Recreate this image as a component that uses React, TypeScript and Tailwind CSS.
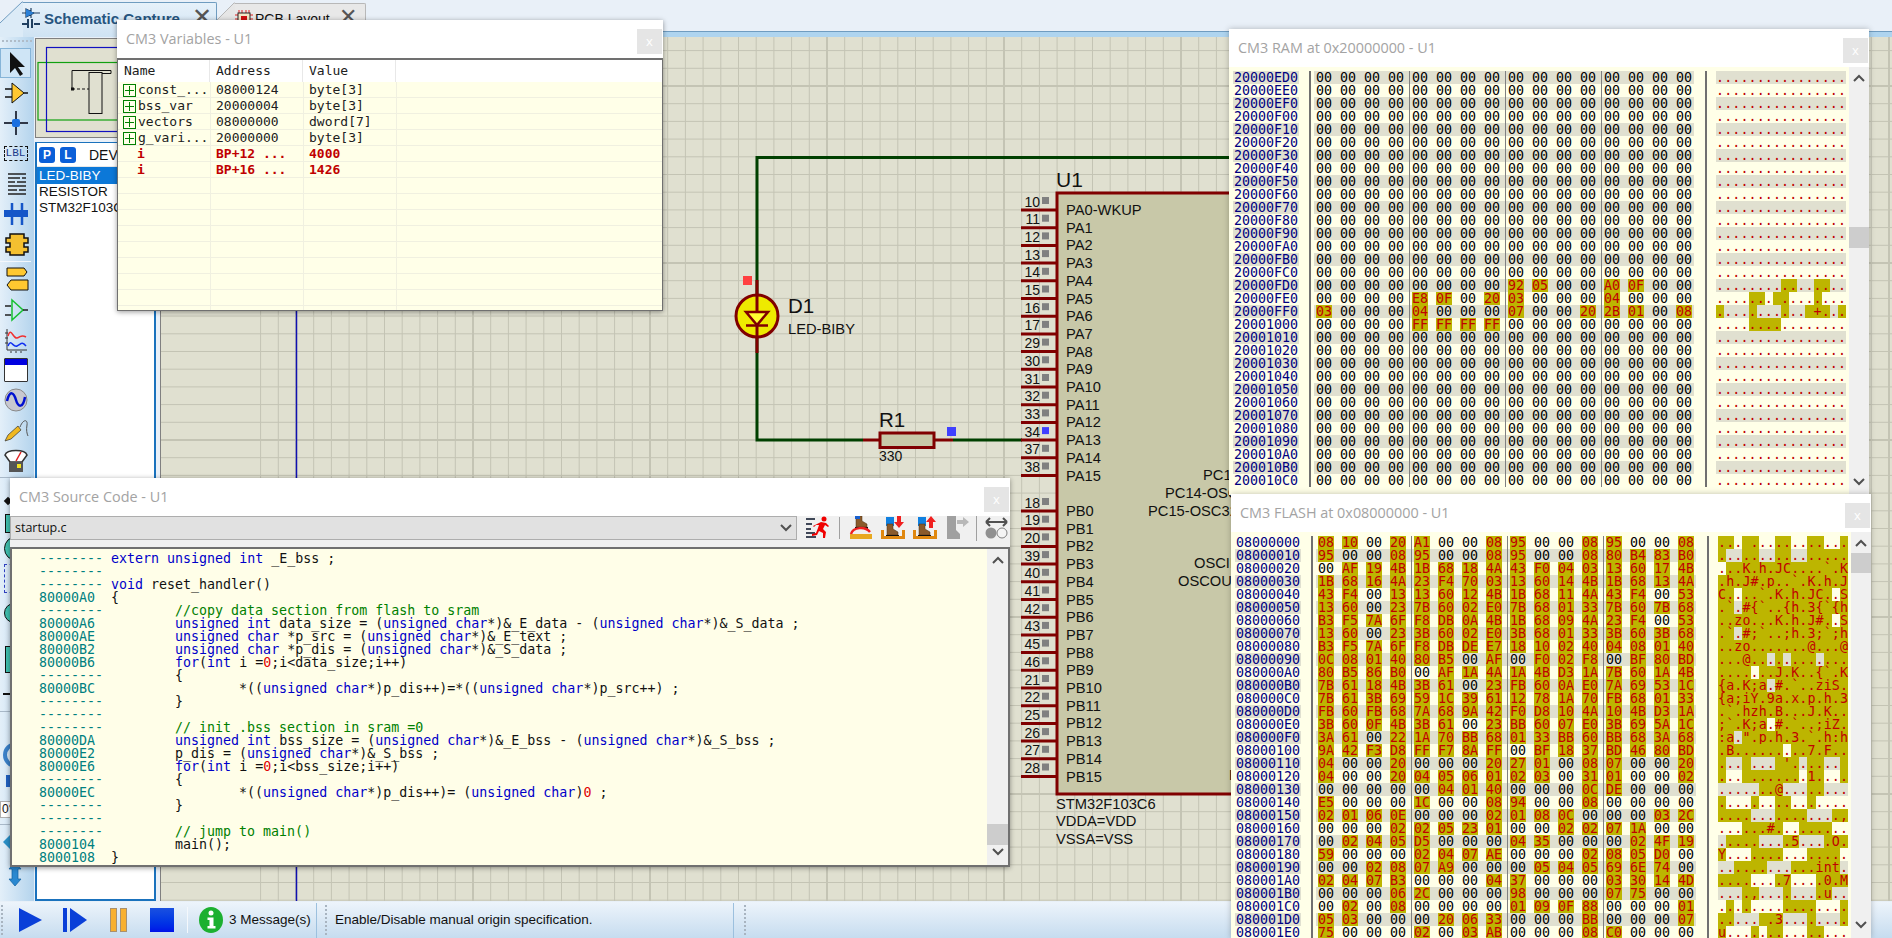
import { type ReactNode } from "react";

const MONO = "font-['DejaVu_Sans_Mono',monospace]";

const ZERO_ROW = "00 00 00 00 00 00 00 00 00 00 00 00 00 00 00 00";

const ramOverrides: Record<number, string> = {
  16: "00 00 00 00 00 00 00 00 92 05 00 00 A0 0F 00 00",
  17: "00 00 00 00 E8 0F 00 20 03 00 00 00 04 00 00 00",
  18: "03 00 00 00 04 00 00 00 07 00 00 20 2B 01 00 08",
  19: "00 00 00 00 FF FF FF FF 00 00 00 00 00 00 00 00",
};
const ramRows = Array.from({ length: 32 }, (_, i) => ramOverrides[i] ?? ZERO_ROW);

const flashRows = [
  "08 10 00 20 A1 00 00 08 95 00 00 08 95 00 00 08",
  "95 00 00 08 95 00 00 08 95 00 00 08 80 B4 83 B0",
  "00 AF 19 4B 1B 68 18 4A 43 F0 04 03 13 60 17 4B",
  "1B 68 16 4A 23 F4 70 03 13 60 14 4B 1B 68 13 4A",
  "43 F4 00 13 13 60 12 4B 1B 68 11 4A 43 F4 00 53",
  "13 60 00 23 7B 60 02 E0 7B 68 01 33 7B 60 7B 68",
  "B3 F5 7A 6F F8 DB 0A 4B 1B 68 09 4A 23 F4 00 53",
  "13 60 00 23 3B 60 02 E0 3B 68 01 33 3B 60 3B 68",
  "B3 F5 7A 6F F8 DB DE E7 18 10 02 40 04 08 01 40",
  "0C 08 01 40 80 B5 00 AF 00 F0 02 F8 00 BF 80 BD",
  "80 B5 86 B0 00 AF 1A 4A 1A 4B D3 1A 7B 60 1A 4B",
  "7B 61 18 4B 3B 61 00 23 FB 60 0A E0 7A 69 53 1C",
  "7B 61 3B 69 59 1C 39 61 12 78 1A 70 FB 68 01 33",
  "FB 60 FB 68 7A 68 9A 42 F0 D8 10 4A 10 4B D3 1A",
  "3B 60 0F 4B 3B 61 00 23 BB 60 07 E0 3B 69 5A 1C",
  "3A 61 00 22 1A 70 BB 68 01 33 BB 60 BB 68 3A 68",
  "9A 42 F3 D8 FF F7 8A FF 00 BF 18 37 BD 46 80 BD",
  "04 00 00 20 00 00 00 20 27 01 00 08 07 00 00 20",
  "04 00 00 20 04 05 06 01 02 03 00 31 01 00 00 02",
  "00 00 00 00 00 04 01 40 00 00 00 0C DE 00 00 00",
  "E5 00 00 00 1C 00 00 08 94 00 00 08 00 00 00 00",
  "02 01 06 0E 00 00 00 02 01 08 0C 00 00 00 03 2C",
  "00 00 00 02 02 05 23 01 00 00 02 02 07 1A 00 00",
  "00 02 04 05 D5 00 00 00 04 35 00 00 00 02 4F 19",
  "59 00 00 00 02 04 07 AE 00 00 00 02 08 05 D0 00",
  "00 00 02 08 07 A9 00 00 00 05 04 05 69 6E 74 00",
  "02 04 07 B3 00 00 00 04 37 00 00 00 03 30 14 4D",
  "00 00 00 06 2C 00 00 00 98 00 00 00 07 75 00 00",
  "00 02 00 08 00 00 00 00 01 09 0F 88 00 00 00 01",
  "05 03 00 00 00 20 06 33 00 00 00 BB 00 00 00 07",
  "75 00 00 00 02 00 03 AB 00 00 00 08 C0 00 00 00",
];

const codeLines: [string, string][] = [
  ["--------", "extern unsigned int _E_bss ;"],
  ["--------", ""],
  ["--------", "void reset_handler()"],
  ["80000A0", "{"],
  ["--------", "        //copy data section from flash to sram"],
  ["80000A6", "        unsigned int data_size = (unsigned char*)&_E_data - (unsigned char*)&_S_data ;"],
  ["80000AE", "        unsigned char *p_src = (unsigned char*)&_E_text ;"],
  ["80000B2", "        unsigned char *p_dis = (unsigned char*)&_S_data ;"],
  ["80000B6", "        for(int i =0;i<data_size;i++)"],
  ["--------", "        {"],
  ["80000BC", "                *((unsigned char*)p_dis++)=*((unsigned char*)p_src++) ;"],
  ["--------", "        }"],
  ["--------", ""],
  ["--------", "        // init .bss section in sram =0"],
  ["80000DA", "        unsigned int bss_size = (unsigned char*)&_E_bss - (unsigned char*)&_S_bss ;"],
  ["80000E2", "        p_dis = (unsigned char*)&_S_bss ;"],
  ["80000E6", "        for(int i =0;i<bss_size;i++)"],
  ["--------", "        {"],
  ["80000EC", "                *((unsigned char*)p_dis++)= (unsigned char)0 ;"],
  ["--------", "        }"],
  ["--------", ""],
  ["--------", "        // jump to main()"],
  ["8000104", "        main();"],
  ["8000108", "}"],
];

const variables = [
  { name: "const_...", addr: "08000124", value: "byte[3]" },
  { name: "bss_var", addr: "20000004", value: "byte[3]" },
  { name: "vectors", addr: "08000000", value: "dword[7]" },
  { name: "g_vari...", addr: "20000000", value: "byte[3]" },
];
const locals = [
  { addr: "BP+12 ...", value: "4000" },
  { addr: "BP+16 ...", value: "1426" },
];

const paPins = ["10", "11", "12", "13", "14", "15", "16", "17", "29", "30", "31", "32", "33", "34", "37", "38"];
const pbPins = ["18", "19", "20", "39", "40", "41", "42", "43", "45", "46", "21", "22", "25", "26", "27", "28"];

function Chevron({ up }: { up?: boolean }) {
  return (
    <svg width="12" height="8" viewBox="0 0 12 8">
      <polyline
        points={up ? "1,7 6,2 11,7" : "1,1 6,6 11,1"}
        fill="none"
        stroke="#505050"
        strokeWidth="2"
      />
    </svg>
  );
}

function Scrollbar({ thumbClass, width }: { thumbClass: string; width: string }) {
  return (
    <div className={`flex shrink-0 flex-col items-center bg-[#f0f0f0] pt-[7px] pb-[9px] ${width}`}>
      <Chevron up />
      <div className={`w-full bg-[#cdcdcd] ${thumbClass}`} />
      <div className="mt-auto">
        <Chevron />
      </div>
    </div>
  );
}

function TitleBar({ title }: { title: string }) {
  return (
    <div className="relative flex h-[38px] shrink-0 items-center bg-white pl-[9px] font-['Open_Sans',sans-serif] text-[14.4px] text-[#a3a3a3]">
      {title}
      <div className="absolute top-[9px] right-px flex h-[25px] w-[25px] items-center justify-center bg-[#e5e5e5] text-[13px] text-white">
        x
      </div>
    </div>
  );
}

function toAscii(hex: string) {
  const n = parseInt(hex, 16);
  if (n === 0x20) return "\u00a0";
  return n > 0x20 && n < 0x7f ? String.fromCharCode(n) : ".";
}

function HexRow({ addr, row, banded }: { addr: string; row: string; banded: boolean }) {
  const bytes = row.split(" ");
  const band = banded ? "bg-[#e0e0d0]" : "";
  const groups = [bytes.slice(0, 4), bytes.slice(4, 8), bytes.slice(8, 12), bytes.slice(12, 16)];
  return (
    <div className="flex h-[13px] pl-[4px] leading-[13px]">
      <div className={`w-[66px] pl-[1px] text-[#000080] ${band}`}>{addr}</div>
      <div className="ml-[10px] w-[2px] bg-[#707070]" />
      <div className={`ml-[3px] flex w-[380px] overflow-hidden ${band}`}>
        {groups.map((group, g) => (
          <div key={g} className={`flex w-[96px] shrink-0 ${g < 3 ? "border-r border-[#808080]" : ""}`}>
            {group.map((b, i) => (
              <span
                key={i}
                className={`ml-[2px] mr-[6px] w-[16px] shrink-0 text-center ${
                  b === "00" ? "text-black" : "bg-[#bdb500] text-[#c00000]"
                }`}
              >
                {b}
              </span>
            ))}
          </div>
        ))}
      </div>
      <div className="ml-[11px] w-[2px] bg-[#707070]" />
      <div className={`ml-[9px] flex w-[130px] text-[#c00000] ${band}`}>
        {bytes.map((b, i) => (
          <span key={i} className={`w-[8.125px] shrink-0 text-center ${b === "00" ? "" : "bg-[#bdb500]"}`}>
            {toAscii(b)}
          </span>
        ))}
      </div>
    </div>
  );
}

function HexWindow({
  className,
  title,
  base,
  rows,
  bandOffset,
  thumbClass,
}: {
  className: string;
  title: string;
  base: number;
  rows: string[];
  bandOffset: number;
  thumbClass: string;
}) {
  return (
    <div className={`absolute flex w-[640px] flex-col bg-white shadow-[0_0_6px_rgba(0,0,0,0.25)] ${className}`}>
      <TitleBar title={title} />
      <div className={`flex min-h-0 flex-1 bg-[#ffffe8] text-[13.3px] ${MONO}`}>
        <div className="flex-1 overflow-hidden pt-[4px]">
          {rows.map((row, i) => (
            <HexRow
              key={i}
              addr={(base + i * 16).toString(16).toUpperCase().padStart(8, "0")}
              row={row}
              banded={(i + bandOffset) % 2 === 0}
            />
          ))}
        </div>
        <Scrollbar thumbClass={thumbClass} width="w-[20px]" />
      </div>
    </div>
  );
}

function VariablesWindow() {
  const cellBorder = "border-r border-[#f0f0e0]";
  return (
    <div className="absolute top-[20px] left-[117px] flex h-[291px] w-[546px] flex-col bg-white shadow-[0_1px_5px_rgba(0,0,0,0.4)]">
      <TitleBar title="CM3 Variables - U1" />
      <div className={`flex-1 overflow-hidden border border-t-2 border-[#707070] text-[13px] leading-[16px] ${MONO}`}>
        <div className="grid h-[22px] grid-cols-[92px_93px_93px_1fr] items-center bg-white text-[#202020]">
          <div className="h-full border-r border-[#e8e8e8] pt-[3px] pl-[6px]">Name</div>
          <div className="h-full border-r border-[#e8e8e8] pt-[3px] pl-[6px]">Address</div>
          <div className="h-full border-r border-[#e8e8e8] pt-[3px] pl-[6px]">Value</div>
          <div />
        </div>
        <div className="h-full bg-[#ffffe8]">
          {variables.map((v) => (
            <div key={v.name} className="grid h-[16px] grid-cols-[93px_93px_93px_1fr] border-b border-[#f0f0e0] text-[#202020]">
              <div className={`flex items-center pl-[5px] ${cellBorder}`}>
                <span className="relative mr-[2px] h-[13px] w-[13px] shrink-0 border border-[#008000]">
                  <span className="absolute top-[5px] left-[1px] h-px w-[9px] bg-[#008000]" />
                  <span className="absolute top-[1px] left-[5px] h-[9px] w-px bg-[#008000]" />
                </span>
                {v.name}
              </div>
              <div className={`pl-[5px] ${cellBorder}`}>{v.addr}</div>
              <div className={`pl-[5px] ${cellBorder}`}>{v.value}</div>
              <div />
            </div>
          ))}
          {locals.map((v) => (
            <div key={v.addr} className="grid h-[16px] grid-cols-[93px_93px_93px_1fr] border-b border-[#f0f0e0] font-bold text-[#c00000]">
              <div className={`pl-[19px] ${cellBorder}`}>i</div>
              <div className={`pl-[5px] ${cellBorder}`}>{v.addr}</div>
              <div className={`pl-[5px] ${cellBorder}`}>{v.value}</div>
              <div />
            </div>
          ))}
          {Array.from({ length: 9 }, (_, i) => (
            <div key={i} className="grid h-[16px] grid-cols-[93px_93px_93px_1fr] border-b border-[#f0f0e0]">
              <div className={cellBorder} />
              <div className={cellBorder} />
              <div className={cellBorder} />
              <div />
            </div>
          ))}
        </div>
      </div>
    </div>
  );
}

function CodeText({ text }: { text: string }) {
  if (text.trim().startsWith("//")) return <span className="text-[#008000]">{text}</span>;
  const parts = text.split(/(\b(?:unsigned|int|char|void|for|extern)\b|=0|\)0)/);
  return (
    <>
      {parts.map((part, i) => {
        if (/^(unsigned|int|char|void|for|extern)$/.test(part))
          return (
            <span key={i} className="text-[#0000c8]">
              {part}
            </span>
          );
        if (part === "=0" || part === ")0")
          return (
            <span key={i}>
              {part[0]}
              <span className="text-[#e00000]">0</span>
            </span>
          );
        return <span key={i}>{part}</span>;
      })}
    </>
  );
}

function Boot({ x, y, color = "#8a5a2b" }: { x: number; y: number; color?: string }) {
  return (
    <g transform={`translate(${x} ${y})`}>
      <path d="M2 0h6v5l5 3v3H2z" fill={color} stroke="#4a3015" strokeWidth="0.5" />
      <rect x="1" y="11" width="13" height="2" fill="#111" />
    </g>
  );
}

function DebugIcons() {
  return (
    <div className="flex h-[23px] shrink-0 items-center">
      <svg width="24" height="23" viewBox="0 0 24 23" className="ml-[9px]">
        <g fill="#404858">
          <rect x="0" y="2" width="9" height="2" />
          <rect x="0" y="7" width="6" height="2" />
          <rect x="0" y="12" width="5" height="2" />
          <rect x="0" y="16" width="9" height="2" />
          <rect x="0" y="20" width="10" height="2" />
        </g>
        <circle cx="18" cy="3" r="2.5" fill="#f00000" />
        <path d="M15 6l5 1 3 3-1 1-3-2-2 4 3 3-1 6h-2l0-5-4-2-2 4-5 1v-2l4-1 2-5 1-3-3 0-2 2-1-1z" fill="#f00000" />
      </svg>
      <div className="mx-[9px] h-[22px] w-px bg-[#a0a0a0]" />
      <svg width="24" height="23" viewBox="0 0 24 23">
        <Boot x={5} y={0} />
        <rect x="6" y="0" width="5" height="3" fill="#1860d0" />
        <rect x="1" y="18" width="22" height="5" fill="#e8a820" />
        <path d="M2 18c2-7 14-8 19-2" fill="none" stroke="#f02020" strokeWidth="2.5" />
      </svg>
      <svg width="24" height="23" viewBox="0 0 24 23" className="ml-[8px]">
        <rect x="5" y="1" width="8" height="9" fill="#1080e0" />
        <Boot x={4} y={8} />
        <path d="M0 14h3v6h18v-6h3v9H0z" fill="#e08810" />
        <path d="M16 0h4v6h3l-5 6-5-6h3z" fill="#f02020" />
      </svg>
      <svg width="24" height="23" viewBox="0 0 24 23" className="ml-[8px]">
        <rect x="5" y="1" width="8" height="9" fill="#1080e0" />
        <Boot x={4} y={8} />
        <path d="M0 14h3v6h18v-6h3v9H0z" fill="#e08810" />
        <path d="M16 12h4V6h3l-5-6-5 6h3z" fill="#f02020" />
      </svg>
      <svg width="24" height="23" viewBox="0 0 24 23" className="ml-[8px]">
        <path d="M2 0h9v14l4 4v5H2z" fill="#a0a0a0" />
        <path d="M12 4h6V1l6 5-6 5V8h-6z" fill="#b8b8b8" />
      </svg>
      <div className="mx-[7px] h-[26px] w-px bg-[#a0a0a0]" />
      <svg width="25" height="23" viewBox="0 0 25 23">
        <path d="M2 6h21M2 6l4-4M2 6l4 4M23 6l-4-4M23 6l-4 4" fill="none" stroke="#505050" strokeWidth="2" />
        <circle cx="7" cy="17" r="5.5" fill="#909090" />
        <circle cx="18" cy="17" r="5" fill="#f4f4f4" stroke="#808080" />
      </svg>
    </div>
  );
}

function SourceWindow() {
  return (
    <div className="absolute top-[478px] left-[10px] flex h-[389px] w-[1000px] flex-col bg-white shadow-[0_1px_5px_rgba(0,0,0,0.4)]">
      <TitleBar title="CM3 Source Code - U1" />
      <div className="flex h-[31px] shrink-0 bg-[#f0f0f0]">
        <div className="flex h-[24px] w-[787px] items-center justify-between border border-[#adadad] bg-[#e1e1e1] pr-[4px] pl-[4px] font-['Open_Sans',sans-serif] text-[12.5px] text-[#111]">
          startup.c
          <Chevron />
        </div>
        <DebugIcons />
      </div>
      <div className="flex min-h-0 flex-1 border-2 border-[#707070] bg-[#fffee8]">
        <div className={`flex-1 overflow-hidden pt-[3px] pl-[27px] text-[13.3px] leading-[13px] whitespace-pre text-[#111] ${MONO}`}>
          {codeLines.map(([addr, text], i) => (
            <div key={i} className="flex h-[13px]">
              <span className="w-[72px] shrink-0 text-[#008080]">{addr}</span>
              <span>
                <CodeText text={text} />
              </span>
            </div>
          ))}
        </div>
        <Scrollbar thumbClass="mt-[260px] h-[21px]" width="w-[21px]" />
      </div>
    </div>
  );
}

function Tool({ children, active, h = "h-[30px]" }: { children?: ReactNode; active?: boolean; h?: string }) {
  return (
    <div
      className={`flex w-[31px] shrink-0 items-center justify-center ${h} ${
        active ? "border border-[#86b4d8] bg-[#cfe5f6]" : ""
      }`}
    >
      {children}
    </div>
  );
}

function ToolIcon({ children }: { children: ReactNode }) {
  return (
    <svg width="26" height="26" viewBox="0 0 26 26">
      {children}
    </svg>
  );
}

function LeftToolbar() {
  return (
    <div className="flex w-[34px] shrink-0 flex-col bg-gradient-to-r from-[#e3eff9] to-[#b4d4ed] pt-[3px]">
      <div className="mx-[2px] mb-[5px] h-[3px] border-t-2 border-dotted border-[#b0bcc8]" />
      <Tool active>
        <ToolIcon>
          <path d="M7 2v21l5-5 5 8 3-2-5-7h7z" fill="#111" />
        </ToolIcon>
      </Tool>
      <Tool>
        <ToolIcon>
          <path d="M9 3l12 10-12 10z" fill="#ffc830" stroke="#111" />
          <path d="M2 9h7M2 17h7M21 13h4" stroke="#111" strokeWidth="1.5" />
        </ToolIcon>
      </Tool>
      <Tool>
        <ToolIcon>
          <path d="M1 13h24M13 1v24" stroke="#303848" strokeWidth="2" />
          <rect x="9" y="9" width="8" height="8" rx="2" fill="#1a6fe0" />
        </ToolIcon>
      </Tool>
      <Tool>
        <div className="flex h-[15px] w-[24px] items-center justify-center border border-dashed border-[#111] font-['Liberation_Mono',monospace] text-[11px] text-[#1a3a8a]">
          LBL
        </div>
      </Tool>
      <Tool>
        <ToolIcon>
          <path
            d="M5 4h18M5 8h12M19 8h4M5 12h7M14 12h9M5 16h18M5 20h9M16 20h7M5 24h18"
            stroke="#222"
            strokeWidth="1.3"
          />
        </ToolIcon>
      </Tool>
      <Tool>
        <ToolIcon>
          <path d="M9 3v8M19 3v8M9 17v8M19 17v8" stroke="#1556c8" strokeWidth="2.5" />
          <rect x="1" y="10" width="24" height="7" fill="#1556c8" />
        </ToolIcon>
      </Tool>
      <Tool h="h-[32px]">
        <ToolIcon>
          <path
            d="M7 3h14v4h4v5h-4v4h4v5h-4v3H7v-3H3v-5h4v-4H3V7h4z"
            fill="#f4c030"
            stroke="#111"
            strokeWidth="1.5"
          />
        </ToolIcon>
      </Tool>
      <div className="my-[1px] h-px w-[31px] bg-[#f4f8fc]" />
      <Tool h="h-[32px]">
        <ToolIcon>
          <path d="M4 2h17l3 4-3 4H4zM25 14v10H8l-4-5 4-5z" fill="#ffc830" stroke="#111" />
        </ToolIcon>
      </Tool>
      <Tool>
        <ToolIcon>
          <path d="M9 3l11 10L9 23z" fill="none" stroke="#16c030" strokeWidth="1.5" />
          <path d="M2 9h6M2 18h6M20 13h5" stroke="#222" strokeWidth="1.3" />
        </ToolIcon>
      </Tool>
      <Tool>
        <ToolIcon>
          <path d="M4 2v21h20" stroke="#333" fill="none" />
          <path d="M2 6h3M2 11h3M2 16h3M8 24v2M13 24v2M18 24v2" stroke="#333" />
          <path d="M5 9c3-10 5 3 9 2s4-4 9-1" fill="none" stroke="#f03030" strokeWidth="1.5" />
          <path d="M5 19c3-8 5 2 9 0s5-5 9 0" fill="none" stroke="#1030f0" strokeWidth="1.5" />
        </ToolIcon>
      </Tool>
      <Tool>
        <div className="flex h-[24px] w-[24px] flex-col rounded-[1px] border border-[#333] bg-white">
          <div className="h-[6px] bg-[#0000e0]" />
        </div>
      </Tool>
      <Tool>
        <ToolIcon>
          <circle cx="13" cy="13" r="11" fill="#c8c8d0" stroke="#888" />
          <path d="M4 14c3-12 7-8 9-1s7 9 9-3" fill="none" stroke="#0010d0" strokeWidth="2.5" />
        </ToolIcon>
      </Tool>
      <Tool>
        <ToolIcon>
          <path d="M2 24l3-6 10-9 3 4-10 9z" fill="#f0b820" stroke="#333" strokeWidth="0.7" />
          <path d="M17 10c3-8 8-8 7-2-1 5 0 9 1 11" fill="none" stroke="#555" />
        </ToolIcon>
      </Tool>
      <Tool>
        <ToolIcon>
          <path d="M2 8c2-6 20-6 22 0l-5 7H7z" fill="#fff" stroke="#333" strokeWidth="1.5" />
          <path d="M13 14l5-9" stroke="#e02020" strokeWidth="1.5" />
          <rect x="6" y="15" width="14" height="10" fill="#555" />
          <rect x="14" y="17" width="4" height="4" fill="#f0e020" />
        </ToolIcon>
      </Tool>
      <div className="mt-[2px] h-px w-[31px] bg-[#a8b8c8]" />
      {/* rest of the column only shows as a sliver left of the source window */}
      <div className="mt-[20px] ml-[5px] h-[6px] w-[6px] rotate-[-45deg] bg-[#111]" />
      <div className="mt-[10px] ml-[5px] h-[19px] w-[8px] border border-[#111] bg-[#40c0b0]" />
      <div className="mt-[3px] ml-[4px] h-[25px] w-[25px] rounded-full border border-[#111] bg-[#40c0b0]" />
      <div className="mt-[3px] ml-[4px] h-[29px] w-[20px] border border-dashed border-[#3040c0]" />
      <div className="mt-[10px] ml-[4px] h-[20px] w-[20px] rounded-full border border-[#111] bg-[#40c0b0]" />
      <div className="mt-[23px] ml-[5px] h-[27px] w-[8px] border border-[#111] bg-[#40c0b0]" />
      <div className="mt-[20px] ml-[3px] h-[2px] w-[10px] bg-[#111]" />
      <div className="mt-[16px] h-px w-[31px] bg-[#a8b8c8]" />
      <div className="mt-[30px] ml-[3px] h-[26px] w-[26px] rounded-full border-[4px] border-[#3a80c8]" />
      <div className="mt-[7px] ml-[6px] h-[12px] w-[8px] bg-[#2060c0]" />
      <div className="mt-[14px] h-[17px] w-[28px] border border-[#b0b0b0] bg-white pl-[1px] text-[12px] leading-[15px] text-[#111]">
        0°
      </div>
      <div className="mt-[6px] h-px w-[31px] bg-[#a8b8c8]" />
      <div className="mt-[9px] ml-[3px] h-0 w-0 border-y-[8px] border-r-[8px] border-y-transparent border-r-[#2a90c8]" />
      <div className="mt-[11px] ml-[3px]">
        <svg width="26" height="26" viewBox="0 0 26 26">
          <path d="M12 1l6 7h-3v10h3l-6 7-6-7h3V8H6z" fill="#2a88d0" stroke="#1060a0" strokeWidth="0.7" />
        </svg>
      </div>
    </div>
  );
}

function DevicePanel() {
  return (
    <div className="ml-px flex w-[121px] shrink-0 flex-col gap-[4px] pt-px">
      <div className="h-[100px] shrink-0 overflow-hidden border border-[#808080] bg-[#e0e0d0]">
        <svg width="300" height="100" viewBox="35 38 300 100">
          <rect x="37" y="61.5" width="290" height="57.5" fill="none" stroke="#10a010" strokeWidth="1.2" />
          <rect x="45.5" y="46.5" width="200" height="84" fill="none" stroke="#1010c0" strokeWidth="1.2" />
          <rect x="88" y="71.5" width="13" height="41" fill="none" stroke="#111" />
          <path d="M71 88V69.5h39M101 72.5h9V69.5" fill="none" stroke="#111" />
          <path d="M71 88h17" fill="none" stroke="#111" strokeDasharray="3 2" />
          <rect x="70" y="86.5" width="3" height="3" fill="#111" />
        </svg>
      </div>
      <div className="min-h-0 flex-1 border-2 border-t border-[#1a72bd] bg-white text-[13.5px] leading-[16px] text-[#111]">
        <div className="flex h-[24px] items-center border-b border-[#e8e8e8] pl-[2px]">
          <span className="flex h-[16px] w-[16px] items-center justify-center rounded-[3px] bg-[#0b5fd8] text-[12px] font-bold text-white">
            P
          </span>
          <span className="ml-[5px] flex h-[16px] w-[16px] items-center justify-center rounded-[3px] bg-[#0b5fd8] text-[12px] font-bold text-white">
            L
          </span>
          <span className="ml-[13px] text-[14px]">DEVICES</span>
        </div>
        <div className="flex h-[17px] items-center bg-[#0c78d8] pl-[2px] text-white">LED-BIBY</div>
        <div className="flex h-[16px] items-center pl-[2px]">RESISTOR</div>
        <div className="flex h-[16px] items-center overflow-hidden pl-[2px] whitespace-nowrap">STM32F103C6</div>
      </div>
    </div>
  );
}

function Pin({ y, num, label, live }: { y: number; num: string; label: string; live?: boolean }) {
  return (
    <g>
      <line x1="1020" y1={y} x2="1056" y2={y} stroke="#800000" strokeWidth="3" />
      <text x="1039" y={y - 3.5} textAnchor="end" fontSize="14" fill="#111">
        {num}
      </text>
      <rect x="1041" y={y - 13} width="7" height="7" fill={live ? "#4040ff" : "#808080"} />
      <text x="1065" y={y + 5} fontSize="14.7" fill="#111">
        {label}
      </text>
    </g>
  );
}

function Schematic() {
  const minor = 17.7;
  const xs = Array.from({ length: 100 }, (_, i) => i);
  const gridX = xs.map((i) => 295 + (i - 2) * minor).filter((x) => x > 160 && x < 1892);
  const gridY = xs.map((i) => 263 + (i - 20) * minor).filter((y) => y > 37 && y < 901);
  const major = (v: number, base: number) => Math.abs(((v - base) / minor) % 10) < 0.01;
  return (
    <svg
      width="1732"
      height="864"
      viewBox="160 37 1732 864"
      className="block font-['Liberation_Sans',sans-serif]"
    >
      <rect x="160" y="37" width="1732" height="864" fill="#e0e0d0" />
      {gridX.map((x) => (
        <line key={x} x1={x} y1="37" x2={x} y2="901" stroke="#c4c4b4" strokeWidth={major(x, 295) ? 2 : 1} />
      ))}
      {gridY.map((y) => (
        <line key={y} x1="160" y1={y} x2="1892" y2={y} stroke="#c4c4b4" strokeWidth={major(y, 263) ? 2 : 1} />
      ))}
      <line x1="295.5" y1="37" x2="295.5" y2="901" stroke="#1010b0" strokeWidth="1.5" />

      {/* wires */}
      <path d="M1300 157.5H756V440H862M952 440H1021" fill="none" stroke="#004000" strokeWidth="3" />

      {/* LED */}
      <line x1="756" y1="280" x2="756" y2="353" stroke="#800000" strokeWidth="3" />
      <circle cx="756" cy="316" r="21" fill="#eeea00" stroke="#800000" strokeWidth="3" />
      <line x1="756" y1="295" x2="756" y2="337" stroke="#800000" strokeWidth="3" />
      <polygon points="745,312 767,312 756,325" fill="#ffff30" stroke="#800000" strokeWidth="2.5" />
      <line x1="745" y1="325.5" x2="767" y2="325.5" stroke="#800000" strokeWidth="2.5" />
      <rect x="742" y="276" width="9" height="9" fill="#ff4040" />
      <text x="787" y="313" fontSize="20.5" fill="#111">
        D1
      </text>
      <text x="787" y="334" fontSize="14.7" fill="#111">
        LED-BIBY
      </text>

      {/* resistor */}
      <line x1="862" y1="440" x2="952" y2="440" stroke="#800000" strokeWidth="3" />
      <rect x="879" y="433" width="54" height="14.5" fill="#c8c8a8" stroke="#800000" strokeWidth="3" />
      <rect x="946" y="427" width="9" height="9" fill="#4040ff" />
      <text x="878" y="427" fontSize="20.5" fill="#111">
        R1
      </text>
      <text x="878" y="461" fontSize="14" fill="#111">
        330
      </text>

      {/* chip */}
      <rect x="1056" y="193" width="300" height="601" fill="#c8c8a8" stroke="#800000" strokeWidth="3" />
      <text x="1055" y="187" fontSize="21" fill="#111">
        U1
      </text>
      {paPins.map((num, i) => (
        <Pin
          key={num}
          y={210 + i * minor}
          num={num}
          live={num === "34"}
          label={i === 0 ? "PA0-WKUP" : `PA${i}`}
        />
      ))}
      {pbPins.map((num, i) => (
        <Pin key={num} y={511 + i * minor} num={num} label={`PB${i}`} />
      ))}
      <g fontSize="14.7" fill="#111">
        <text x="1202" y="480">
          PC13_TAMPER-RTC
        </text>
        <text x="1164" y="498">
          PC14-OSC32_IN
        </text>
        <text x="1147" y="516">
          PC15-OSC32_OUT
        </text>
        <text x="1193" y="568">
          OSCIN
        </text>
        <text x="1177" y="586">
          OSCOUT
        </text>
        <text x="1228" y="780">
          BOOT0
        </text>
        <text x="1055" y="809">
          STM32F103C6
        </text>
        <text x="1055" y="826">
          VDDA=VDD
        </text>
        <text x="1055" y="844">
          VSSA=VSS
        </text>
      </g>
    </svg>
  );
}

function Tabs() {
  return (
    <div className="flex h-[37px] shrink-0 bg-[#e9f0f8]">
      <div className="flex h-[37px] w-[217px] shrink-0">
        <svg width="23" height="37" viewBox="0 0 23 37" className="shrink-0">
          <path d="M0 23L22 2h1v35H0z" fill="#dcebf7" />
          <path d="M0 23L22 2h1" fill="none" stroke="#6f9cc0" />
        </svg>
        <div className="mt-[2px] flex flex-1 items-start gap-[12px] rounded-tr-[2px] border-t border-r border-[#6f9cc0] bg-gradient-to-b from-[#e6f1fa] to-[#cfe3f3] pt-[5px] font-['Liberation_Sans',sans-serif] text-[15px] font-bold text-[#27557f]">
          <div className="flex">
            <svg width="18" height="22" viewBox="0 0 18 22" className="mr-[4px] -ml-[1px] -mt-[1px]">
              <path d="M0 6h18M9 1v10M4 2l8 4-8 4z" fill="none" stroke="#1f3f60" strokeWidth="1.2" />
              <path d="M4 2l8 4-8 4z" fill="#2a80d8" />
              <path d="M0 17h6M12 17h6M6 12v9M10 12v9" fill="none" stroke="#1f3f60" strokeWidth="2" />
            </svg>
            <span>Schematic Capture</span>
          </div>
          <span className="text-[24px] leading-[18px] font-normal text-[#555]">✕</span>
        </div>
      </div>
      <div className="flex w-[149px] shrink-0 flex-col">
        <div className="flex h-[32px] border-b border-[#6f9cc0]">
          <svg width="18" height="31" viewBox="0 0 18 31" className="shrink-0">
            <path d="M0 20L17 3h1v28H0z" fill="#e6e6e6" />
            <path d="M0 20L17 3h1" fill="none" stroke="#b8b8b8" />
          </svg>
          <div className="mt-[3px] flex flex-1 items-start gap-[9px] rounded-tr-[2px] border-t border-r border-[#b8b8b8] bg-[#e8e8e8] pt-[5px] text-[14px] text-[#111]">
            <div className="flex items-center gap-[2px]">
              <svg width="18" height="18" viewBox="0 0 18 18" className="-mt-[2px]">
                <path d="M4 0v18M7 0v18M11 0v18M14 0v18M0 5h18M0 9h18M0 13h18" stroke="#e02020" />
                <rect x="3" y="3" width="12" height="12" fill="#f4e8c8" stroke="#222" />
                <rect x="6" y="6" width="6" height="6" fill="#d01010" />
              </svg>
              <span>PCB Layout</span>
            </div>
            <span className="text-[22px] leading-[16px] text-[#555]">✕</span>
          </div>
        </div>
        <div className="h-[5px] bg-[#aed4ef]" />
      </div>
      <div className="flex flex-1 flex-col">
        <div className="h-[32px] border-b border-[#6f9cc0]" />
        <div className="h-[5px] bg-[#aed4ef]" />
      </div>
    </div>
  );
}

function StatusBar() {
  return (
    <div className="flex h-[37px] shrink-0 items-center border-t border-[#e8f0f8] bg-gradient-to-b from-[#edf4fb] to-[#c6dcef] text-[13.5px] text-[#111]">
      <div className="ml-[1px] h-[30px] border-l-2 border-dotted border-[#a8b4c0]" />
      <svg width="24" height="24" viewBox="0 0 24 24" className="ml-[15px]">
        <path d="M1 0l23 12L1 24z" fill="#0a3fd8" />
      </svg>
      <svg width="24" height="24" viewBox="0 0 24 24" className="ml-[21px]">
        <rect x="0" y="0" width="4" height="24" fill="#0a3fd8" />
        <path d="M7 0l17 12L7 24z" fill="#0a3fd8" />
      </svg>
      <svg width="17" height="24" viewBox="0 0 17 24" className="ml-[23px]">
        <rect x="0.5" y="0.5" width="6" height="23" fill="#f8b030" stroke="#a89070" />
        <rect x="10.5" y="0.5" width="6" height="23" fill="#f8b030" stroke="#a89070" />
      </svg>
      <div className="ml-[23px] h-[24px] w-[24px] bg-gradient-to-b from-[#1a50e0] to-[#0010e8]" />
      <div className="ml-[13px] h-[26px] w-px bg-[#f4f8fc]" />
      <svg width="24" height="26" viewBox="0 0 24 26" className="ml-[11px]">
        <ellipse cx="12" cy="13" rx="12" ry="13" fill="#1cb030" />
        <circle cx="12" cy="6" r="2.5" fill="#fff" />
        <path d="M8.5 10.5h6V19h2v2.5h-8V19h2v-6h-2z" fill="#fff" />
      </svg>
      <span className="ml-[6px] w-[82px] whitespace-nowrap">3 Message(s)</span>
      <div className="ml-[5px] h-[35px] w-px bg-[#9cc0de]" />
      <div className="ml-[8px] h-[30px] border-l-2 border-dotted border-[#a8b4c0]" />
      <span className="ml-[8px] w-[398px] whitespace-nowrap">Enable/Disable manual origin specification.</span>
      <div className="h-[35px] w-px bg-[#9cc0de]" />
      <div className="ml-[10px] h-[30px] border-l-2 border-dotted border-[#a8b4c0]" />
    </div>
  );
}

export default function App() {
  return (
    <div className="relative flex h-[938px] w-[1892px] flex-col overflow-hidden bg-[#e9f0f8] font-['Liberation_Sans',sans-serif]">
      <Tabs />
      <div className="flex min-h-0 flex-1">
        <LeftToolbar />
        <DevicePanel />
        <div className="ml-[4px] min-w-0 flex-1 overflow-hidden border-l border-[#808080]">
          <Schematic />
        </div>
      </div>
      <StatusBar />
      <VariablesWindow />
      <SourceWindow />
      <HexWindow
        className="top-[29px] left-[1229px] h-[466px]"
        title="CM3 RAM at 0x20000000 - U1"
        base={0x20000ed0}
        rows={ramRows}
        bandOffset={0}
        thumbClass="mt-[145px] h-[21px]"
      />
      <HexWindow
        className="top-[494px] left-[1231px] h-[444px]"
        title="CM3 FLASH at 0x08000000 - U1"
        base={0x08000000}
        rows={flashRows}
        bandOffset={1}
        thumbClass="mt-[6px] h-[20px]"
      />
    </div>
  );
}
